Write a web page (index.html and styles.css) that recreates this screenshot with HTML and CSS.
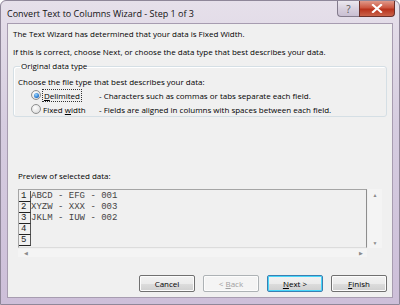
FILE: index.html
```html
<!DOCTYPE html>
<html>

<head>
    <title>Convert Text to Columns Wizard</title>
    <link rel="stylesheet" href="styles.css">
</head>

<body>

    <div class="window">

        <div class="titlebar">
            <span class="title">Convert Text to Columns Wizard - Step 1 of 3</span>
            <div class="caption-buttons">
                <span class="help-btn">?</span>
                <span class="close-btn">
                    <svg width="12" height="9" viewBox="0 0 12 9">
                        <path d="M2 1 L10 8 M10 1 L2 8" stroke="#fff" stroke-width="2.2" stroke-linecap="square" />
                    </svg>
                </span>
            </div>
        </div>

        <div class="client">

            <p class="intro">The Text Wizard has determined that your data is Fixed Width.</p>
            <p class="intro">If this is correct, choose Next, or choose the data type that best describes your data.</p>

            <fieldset class="group">
                <legend>Original data type</legend>
                <div class="group-caption">Choose the file type that best describes your data:</div>

                <div class="option">
                    <span class="radio checked"></span>
                    <span class="option-name"><span class="focus"><u>D</u>elimited</span></span>
                    <span class="option-desc">- Characters such as commas or tabs separate each field.</span>
                </div>
                <div class="option">
                    <span class="radio"></span>
                    <span class="option-name">Fixed <u>w</u>idth</span>
                    <span class="option-desc">- Fields are aligned in columns with spaces between each field.</span>
                </div>
            </fieldset>

            <div class="preview-label">Preview of selected data:</div>

            <div class="preview">
                <div class="data">
                    <div class="row"><span class="num">1</span><span class="line">ABCD - EFG - 001</span></div>
                    <div class="row"><span class="num">2</span><span class="line">XYZW - XXX - 003</span></div>
                    <div class="row"><span class="num">3</span><span class="line">JKLM - IUW - 002</span></div>
                    <div class="row"><span class="num">4</span><span class="line"></span></div>
                    <div class="row"><span class="num">5</span><span class="line"></span></div>
                </div>
                <div class="vscroll">
                    <span class="arrow">&#9650;</span>
                    <span class="arrow">&#9660;</span>
                </div>
                <div class="hscroll">
                    <span class="arrow">&#9664;</span>
                    <span class="arrow">&#9654;</span>
                </div>
                <div class="corner"></div>
            </div>

            <div class="buttons">
                <button>Cancel</button>
                <button disabled>&lt; <u>B</u>ack</button>
                <button class="default"><u>N</u>ext &gt;</button>
                <button><u>F</u>inish</button>
            </div>

        </div>
    </div>

</body>

</html>
```

FILE: styles.css
```css
* {
    box-sizing: border-box;
}

body {
    margin: 0;
    background-color: #fff;
    font-family: "Open Sans", "Noto Sans", sans-serif;
    font-size: 8px;
    color: #000;
}

.window {
    width: 400px;
    height: 305px;
    display: flex;
    flex-direction: column;
    padding: 0 6px 6px 6px;
    background-color: #d9cfe0;
    background-image: linear-gradient(180deg, #e6e0ea 0%, #d6cde0 40%, #cdbfd9 100%);
    border: 1px solid #8f8799;
    border-radius: 6px 6px 0 0;
}

.titlebar {
    height: 22px;
    display: flex;
    justify-content: space-between;
    align-items: flex-start;
}

.title {
    font-size: 9px;
    margin-top: 6px;
    color: #111;
}

.caption-buttons {
    display: flex;
    margin-right: -2px;
}

.help-btn,
.close-btn {
    height: 16px;
    display: flex;
    align-items: center;
    justify-content: center;
    border: 1px solid #837b8c;
    border-top: none;
}

.help-btn {
    width: 22px;
    font-size: 10px;
    color: #555;
    background-image: linear-gradient(180deg, #ece8ef 0%, #d8d0de 50%, #c9bfd2 100%);
    border-radius: 0 0 0 4px;
    border-right: none;
}

.close-btn {
    width: 36px;
    background-image: linear-gradient(180deg, #e0998a 0%, #cc5640 45%, #b8321c 55%, #c9624a 100%);
    border-color: #6b302a;
    border-radius: 0 0 4px 0;
}

.client {
    flex: 1;
    display: flex;
    flex-direction: column;
    background-color: #f0f0f0;
    border: 1px solid #a79cb0;
    padding: 1px 5px 0 5px;
}

.intro {
    margin: 0;
    height: 18px;
    line-height: 18px;
}

.group {
    margin: 0;
    padding: 4px 0 2px 4px;
    border: 1px solid #d5dfe5;
    border-radius: 3px;
    box-shadow: inset 1px 1px 0 #fff;
    height: 56px;
}

.group legend {
    padding: 0 1px;
    margin-left: 2px;
    line-height: 10px;
}

.group-caption {
    height: 13px;
    line-height: 13px;
}

.option {
    display: flex;
    align-items: center;
    height: 14px;
    padding-left: 13px;
}

.radio {
    width: 10px;
    height: 10px;
    border-radius: 50%;
    border: 1px solid #8e8f8f;
    background-image: radial-gradient(circle at 40% 35%, #ffffff 0%, #e5e5e5 60%, #cfcfcf 100%);
    display: flex;
    align-items: center;
    justify-content: center;
}

.radio.checked::after {
    content: "";
    width: 5px;
    height: 5px;
    border-radius: 50%;
    background-image: radial-gradient(circle at 40% 35%, #9ad7ff 0%, #1c6ec9 70%, #0d4b92 100%);
}

.option-name {
    width: 56px;
    margin-left: 2px;
}

.focus {
    outline: 1px dotted #333;
    padding: 0 1px;
}

.preview-label {
    margin-top: 53px;
    margin-bottom: 7px;
    padding-left: 5px;
    line-height: 12px;
}

.preview {
    margin: 0 5px 0 5px;
    display: grid;
    grid-template-columns: 1fr 15px;
    grid-template-rows: 59px 9px;
}

.data {
    border: 1px solid #a5a5a5;
    border-right-color: #8d8d8d;
    border-bottom-color: #dcdcdc;
    padding-top: 1px;
    font-family: "Liberation Mono", "DejaVu Sans Mono", monospace;
    font-size: 9px;
    color: #444;
}

.row {
    display: flex;
    height: 11px;
    line-height: 11px;
}

.num {
    width: 12px;
    padding-left: 2px;
    border-bottom: 1px solid #222;
    border-right: 1px solid #555;
    color: #222;
}

.line {
    white-space: pre;
}

.vscroll {
    display: flex;
    flex-direction: column;
    justify-content: space-between;
    align-items: center;
    padding: 4px 0 2px 0;
    background-color: #f4f4f4;
    margin-left: 1px;
}

.hscroll {
    display: flex;
    justify-content: space-between;
    align-items: center;
    padding: 0 4px 0 6px;
    background-color: #f4f4f4;
    margin-top: 1px;
}

.arrow {
    font-size: 5px;
    color: #8a8a8a;
    line-height: 5px;
}

.corner {
    background-color: #f0f0f0;
}

.buttons {
    display: flex;
    justify-content: flex-end;
    gap: 8px;
    margin-top: 18px;
}

.buttons button {
    width: 56px;
    height: 17px;
    padding: 0;
    font-family: inherit;
    font-size: 8px;
    color: #000;
    border: 1px solid #707070;
    border-radius: 2px;
    background-image: linear-gradient(180deg, #f2f2f2 0%, #ebebeb 50%, #dddddd 51%, #cfcfcf 100%);
    box-shadow: inset 0 0 0 1px #fcfcfc;
}

.buttons button:disabled {
    color: #a0a0a0;
    border-color: #adb2b5;
    background-image: none;
    background-color: #f4f4f4;
}

.buttons button.default {
    border-color: #3c7fb1;
    box-shadow: inset 0 0 0 1px #48d7fb;
}
```
